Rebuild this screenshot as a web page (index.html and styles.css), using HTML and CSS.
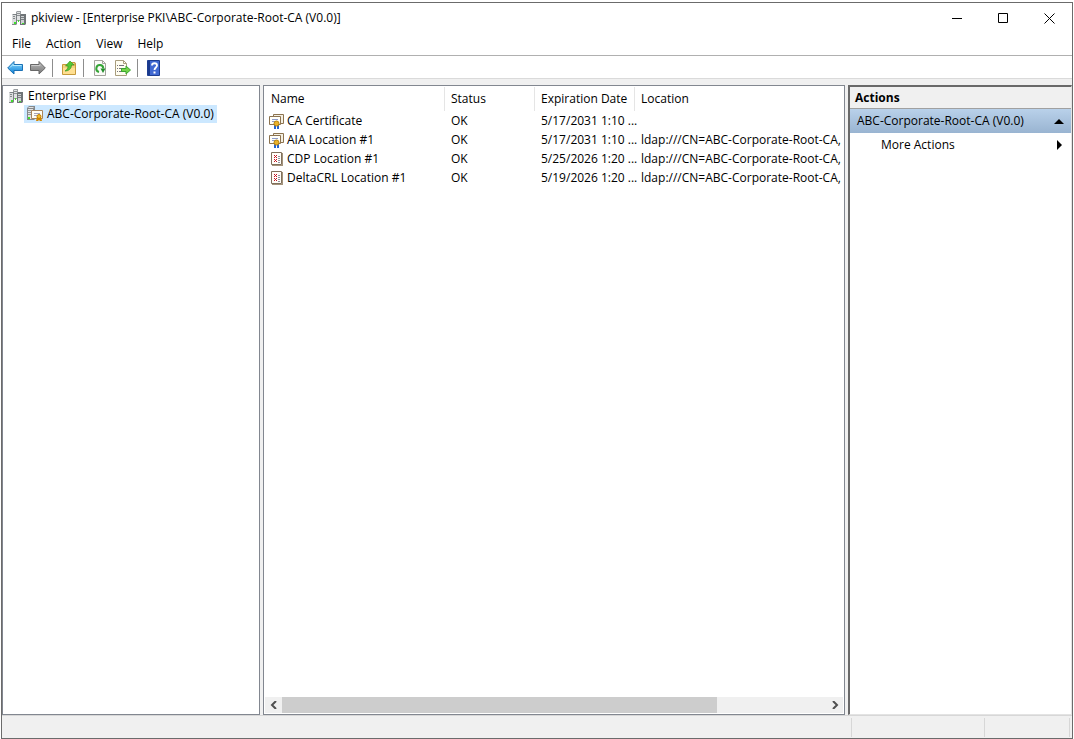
FILE: index.html
```html
<!DOCTYPE html>
<html lang="en">
<head>
    <meta charset="UTF-8">
    <meta name="viewport" content="width=device-width, initial-scale=1.0">
    <title>pkiview</title>
    <link rel="stylesheet" href="styles.css">
</head>
<body>

<!-- Shared icons -->
<svg class="icon-defs" aria-hidden="true">
    <symbol id="icon-servers" viewBox="0 0 16 16">
        <path d="M5 2l1-1h4v10H5z" fill="#9a9ea1"/>
        <path d="M6 2h3v8H6z" fill="#e0e2e3"/>
        <path d="M6 3h3v1H6zM6 5h3v1H6z" fill="#8d9194"/>
        <path d="M1 5l1-1h4v10l-1 1H1z" fill="#7d8285"/>
        <path d="M1 5h4v9H1z" fill="#dcdedf"/>
        <path d="M2 6h2v1H2zM2 8h2v1H2zM1 14h4v1H1z" fill="#84888b"/>
        <path d="M9 5l1-1h5v10l-1 1H9z" fill="#6f7477"/>
        <path d="M10 6h3v8h-3z" fill="#cfd2d4"/>
        <path d="M10 7h3v1h-3zM10 9h3v1h-3z" fill="#7a7f82"/>
        <path d="M3 12h2v2H3zM7 10h1v2H7zM11 13h2v1h-2z" fill="#3fe02b"/>
    </symbol>
    <symbol id="icon-ca" viewBox="0 0 16 16">
        <path d="M0 2l2-2h6v13l-1 1H0z" fill="#85898c"/>
        <path d="M1 3h5v10H1zM2 1h5L6 2H1z" fill="#e2e4e5"/>
        <path d="M1 4h5v1H1zM1 6h3v1H1zM1 8h3v1H1z" fill="#93979a"/>
        <path d="M1 11h2v2H1z" fill="#3fe02b"/>
        <path d="M4.500 4.500h11v8h-11z" fill="#fffdf4" stroke="#a8865c"/>
        <path d="M7 7h6v1H7zM7 9h3v1H7z" fill="#a7a5b8"/>
        <path d="M10 11l-1 4h2l1-1 1 1h2l-1-4z" fill="#d48700"/>
        <circle cx="12" cy="10.500" r="2" fill="#f4bd2c" stroke="#c27f00"/>
    </symbol>
    <symbol id="icon-cert" viewBox="0 0 16 16">
        <path d="M4.500 1.500h10v9h-10z" fill="#f5f0e3" stroke="#8c734f"/>
        <path d="M.5 3.500h11v8H.5z" fill="#fffef9" stroke="#8c734f"/>
        <path d="M3 6h6v1H3zM3 8h3v1H3z" fill="#8e9bc9"/>
        <path d="M5 11h2v5H5zM8 11h2v5H8z" fill="#2563cf"/>
        <circle cx="7.500" cy="10.500" r="2.500" fill="#e9b22c" stroke="#b98208"/>
    </symbol>
    <symbol id="icon-crl" viewBox="0 0 16 16">
        <path d="M2.500 1.500h10v12h-10z" fill="#fffdf8" stroke="#80705c"/>
        <path d="M13 2h1v13H3v-1h10z" fill="#a3937b"/>
        <path d="M5 4h1v1H5zM7 4h1v1H7zM6 5h1v1H6zM5 6h1v1H5zM7 6h1v1H7zM5 8h1v1H5zM7 8h1v1H7zM6 9h1v1H6zM5 10h1v1H5zM7 10h1v1H7z" fill="#c31322"/>
        <path d="M9 5h2v1H9zM9 7h2v1H9zM9 9h2v1H9zM9 11h2v1H9z" fill="#8f92a0"/>
    </symbol>
</svg>

<div class="window">
    <header class="title-bar">
        <svg class="icon"><use href="#icon-servers"/></svg>
        <h1>pkiview - [Enterprise PKI\ABC-Corporate-Root-CA (V0.0)]</h1>
        <div class="window-buttons">
            <button type="button" aria-label="Minimize"><svg viewBox="0 0 11 11"><path d="M0 5.500h10"/></svg></button>
            <button type="button" aria-label="Maximize"><svg viewBox="0 0 11 11"><path d="M.5.500h9v9h-9z"/></svg></button>
            <button type="button" aria-label="Close"><svg viewBox="0 0 11 11"><path d="M.5.500l10 10M10.500.500l-10 10"/></svg></button>
        </div>
    </header>

    <nav class="menu-bar">
        <button type="button">File</button>
        <button type="button">Action</button>
        <button type="button">View</button>
        <button type="button">Help</button>
    </nav>

    <div class="toolbar">
        <button type="button" aria-label="Back">
            <svg class="icon" viewBox="0 0 16 16">
                <defs><linearGradient id="blue" x2="0" y2="1"><stop stop-color="#8edcff"/><stop offset="1" stop-color="#0b7fd6"/></linearGradient></defs>
                <path d="M.7 8L7 1.500v3h8.500v6H7v3.500z" fill="url(#blue)" stroke="#1b70b4"/>
                <path d="M3 7.500l3-3v1h8.500" fill="none" stroke="#b5eaff"/>
            </svg>
        </button>
        <button type="button" aria-label="Forward">
            <svg class="icon" viewBox="0 0 16 16">
                <defs><linearGradient id="gray" x2="0" y2="1"><stop stop-color="#bbb"/><stop offset="1" stop-color="#777"/></linearGradient></defs>
                <path d="M15.300 8L9 1.500v3H.5v6H9v3.500z" fill="url(#gray)" stroke="#686868"/>
                <path d="M1.500 5.500H10v-1" fill="none" stroke="#ccc"/>
            </svg>
        </button>
        <span class="separator"></span>
        <button type="button" aria-label="Up one level">
            <svg class="icon" viewBox="0 0 16 16">
                <path d="M1.500 4.500h5l1-1h7v11h-13z" fill="#f3d27b" stroke="#c69a3c"/>
                <path d="M10 2.500h4V5h-4z" fill="#ead08b" stroke="#c69a3c"/>
                <path d="M2 8h12v6H2z" fill="#ffdf91"/>
                <path d="M4 11c2-1 3-3 3-5H4.500L9 1l4 4h-2.500c0 4-3 6-6.500 6z" fill="#55c936" stroke="#2f8f1e" stroke-width=".6"/>
            </svg>
        </button>
        <span class="separator"></span>
        <button type="button" aria-label="Refresh">
            <svg class="icon" viewBox="0 0 16 16">
                <path d="M2.500.500h8l3 3v12h-11z" fill="#fbfbf8" stroke="#a3a39d"/>
                <path d="M10.500.500v3h3" fill="none" stroke="#a3a39d"/>
                <path d="M7 12a3.500 3.500 0 1 1 4.300-3.500" fill="none" stroke="#35a536" stroke-width="2"/>
                <path d="M8.500 8.500h5l-2.500 4.500z" fill="#248d2c"/>
            </svg>
        </button>
        <button type="button" aria-label="Export list">
            <svg class="icon" viewBox="0 0 16 16">
                <path d="M.5.500h8l3 3v12H.5z" fill="#fffdf0" stroke="#a99d7d"/>
                <path d="M8.500.500v3h3" fill="none" stroke="#a99d7d"/>
                <path d="M2 5h1v1H2zM2 8h1v1H2zM2 11h1v1H2zM4 5h5v1H4zM4 8h4v1H4zM4 11h4v1H4z" fill="#77747d"/>
                <path d="M6.500 8.500H11V6l4.500 4-4.500 4v-2.500H6.500z" fill="#75d449" stroke="#3ba52f"/>
            </svg>
        </button>
        <span class="separator"></span>
        <button type="button" aria-label="Help topics">
            <svg class="icon" viewBox="0 0 16 16">
                <path d="M1.500.500h12v15h-12z" fill="#4169d2" stroke="#1d3d91"/>
                <path d="M3 1v14" stroke="#19398e" stroke-width="2"/>
                <path d="M6 5.500c0-3 5-3 5 0 0 2-2.500 2-2.500 4.500M7.500 12.500h2" fill="none" stroke="#fff" stroke-width="1.800"/>
            </svg>
        </button>
    </div>

    <main class="panes">
        <section class="tree" aria-label="Console tree">
            <ul>
                <li>
                    <div class="tree-item"><svg class="icon"><use href="#icon-servers"/></svg><span>Enterprise PKI</span></div>
                    <ul>
                        <li><div class="tree-item selected"><svg class="icon"><use href="#icon-ca"/></svg><span>ABC-Corporate-Root-CA (V0.0)</span></div></li>
                    </ul>
                </li>
            </ul>
        </section>

        <section class="list">
            <div class="list-content">
                <table>
                    <colgroup>
                        <col class="col-name">
                        <col class="col-status">
                        <col class="col-date">
                        <col>
                    </colgroup>
                    <thead>
                        <tr><th>Name</th><th>Status</th><th>Expiration Date</th><th>Location</th></tr>
                    </thead>
                    <tbody>
                        <tr>
                            <td><div class="name"><svg class="icon"><use href="#icon-cert"/></svg>CA Certificate</div></td>
                            <td>OK</td><td>5/17/2031 1:10 ...</td><td></td>
                        </tr>
                        <tr>
                            <td><div class="name"><svg class="icon"><use href="#icon-cert"/></svg>AIA Location #1</div></td>
                            <td>OK</td><td>5/17/2031 1:10 ...</td><td>ldap:///CN=ABC-Corporate-Root-CA,</td>
                        </tr>
                        <tr>
                            <td><div class="name"><svg class="icon"><use href="#icon-crl"/></svg>CDP Location #1</div></td>
                            <td>OK</td><td>5/25/2026 1:20 ...</td><td>ldap:///CN=ABC-Corporate-Root-CA,</td>
                        </tr>
                        <tr>
                            <td><div class="name"><svg class="icon"><use href="#icon-crl"/></svg>DeltaCRL Location #1</div></td>
                            <td>OK</td><td>5/19/2026 1:20 ...</td><td>ldap:///CN=ABC-Corporate-Root-CA,</td>
                        </tr>
                    </tbody>
                </table>
            </div>
            <div class="scrollbar">
                <button type="button" aria-label="Scroll left"><svg viewBox="0 0 8 8"><path d="M6 0L2 4l4 4"/></svg></button>
                <div class="track"><div class="thumb"></div></div>
                <button type="button" aria-label="Scroll right"><svg viewBox="0 0 8 8"><path d="M2 0l4 4-4 4"/></svg></button>
            </div>
        </section>

        <aside class="actions">
            <h2>Actions</h2>
            <button type="button" class="action-group">ABC-Corporate-Root-CA (V0.0)
                <svg viewBox="0 0 10 10"><path d="M0 8l5-5 5 5z"/></svg>
            </button>
            <button type="button" class="action-item">More Actions
                <svg viewBox="0 0 10 10"><path d="M3 0l5 5-5 5z"/></svg>
            </button>
        </aside>
    </main>

    <footer class="status-bar">
        <span class="status-main"></span>
        <span class="status-mid"></span>
        <span class="status-end"></span>
    </footer>
</div>

</body>
</html>
```
FILE: styles.css
```css
* {
    margin: 0;
    padding: 0;
    box-sizing: border-box;
}

body {
    height: 100vh;
    padding: 2px 1px 0;
    background: #fff;
    color: #000;
    font: 12px/18px "Open Sans", "Noto Sans", sans-serif;
    overflow: hidden;
}

button {
    border: none;
    background: none;
    color: inherit;
    font: inherit;
}

ul {
    list-style: none;
}

.icon-defs {
    position: absolute;
    width: 0;
    height: 0;
}

.icon {
    width: 16px;
    height: 16px;
    flex: none;
    display: block;
}

.window {
    height: 100%;
    display: flex;
    flex-direction: column;
    border: 1px solid #6b6b6b;
    background: #f0f0f0;
}

/* Title bar */
.title-bar {
    display: flex;
    align-items: center;
    height: 30px;
    padding-left: 9px;
    gap: 4px;
    background: #fff;
}

.title-bar h1 {
    flex: 1;
    font-size: 12px;
    font-weight: normal;
}

.window-buttons {
    display: flex;
    height: 100%;
}

.window-buttons button {
    width: 46px;
    display: flex;
    align-items: center;
    justify-content: center;
}

.window-buttons svg {
    width: 11px;
    height: 11px;
    fill: none;
    stroke: #000;
}

/* Menu */
.menu-bar {
    display: flex;
    height: 23px;
    padding-left: 2px;
    background: #fff;
    border-bottom: 1px solid #b0b0b0;
}

.menu-bar button {
    padding: 0 8px;
}

.menu-bar button + button {
    padding-left: 7px;
}

/* Toolbar */
.toolbar {
    display: flex;
    align-items: center;
    height: 23px;
    padding: 2px 0 0 5px;
    background: #fff;
    border-bottom: 1px solid #dadada;
}

.toolbar button {
    margin-right: 7px;
}

.separator {
    width: 1px;
    height: 18px;
    margin: 0 8px 0 -1px;
    background: #8d8d8d;
}

/* Panes */
.panes {
    flex: 1;
    display: flex;
    min-height: 0;
    padding-top: 6px;
}

.tree,
.list {
    background: #fff;
    border: 1px solid #828790;
}

.tree {
    width: 258px;
    margin-right: 3px;
    padding-top: 1px;
}

.tree ul ul {
    padding-left: 21px;
}

.tree-item {
    display: flex;
    align-items: center;
    width: max-content;
    height: 18px;
    gap: 4px;
    padding: 0 5px;
}

.tree-item.selected {
    padding: 0 3px;
    background: #cce8ff;
}

.list {
    flex: 1;
    min-width: 0;
    display: flex;
    flex-direction: column;
    padding: 1px;
}

.list-content {
    flex: 1;
    overflow: hidden;
}

table {
    width: 100%;
    table-layout: fixed;
    border-collapse: separate;
    border-spacing: 0;
}

.col-name {
    width: 180px;
}

.col-status {
    width: 90px;
}

.col-date {
    width: 100px;
}

th,
td {
    padding-left: 6px;
    text-align: left;
    white-space: nowrap;
}

th {
    height: 24px;
    font-weight: normal;
    border-right: 1px solid #e5e5e5;
}

th:last-child {
    border-right: none;
}

td {
    height: 19px;
}

td:first-child {
    padding-left: 4px;
}

.name {
    display: flex;
    align-items: center;
    gap: 2px;
}

.scrollbar {
    display: flex;
    height: 16px;
    background: #f0f0f0;
}

.scrollbar button {
    width: 17px;
    display: flex;
    align-items: center;
    justify-content: center;
}

.scrollbar svg {
    width: 8px;
    height: 8px;
    fill: none;
    stroke: #505050;
    stroke-width: 2;
}

.track {
    flex: 1;
}

.thumb {
    width: 80%;
    height: 100%;
    background: #cdcdcd;
}

/* Actions pane */
.actions {
    width: 224px;
    margin-left: 3px;
    background: #fff;
    border: 2px solid #696969;
    border-color: #696969 #e3e3e3 #e3e3e3 #696969;
    border-right-width: 1px;
    border-bottom-width: 1px;
}

.actions h2 {
    height: 22px;
    padding-left: 5px;
    background: #f0f0f0;
    border-bottom: 1px solid #a0a0a0;
    font-size: 12px;
    line-height: 22px;
}

.actions button {
    display: flex;
    align-items: center;
    justify-content: space-between;
    width: 100%;
    height: 24px;
    padding: 0 7px;
}

.actions svg {
    width: 10px;
    height: 10px;
}

.actions .action-group {
    background: linear-gradient(#b9d1ea, #99b4d1);
}

.actions .action-item {
    padding-left: 31px;
}

/* Status bar */
.status-bar {
    display: flex;
    height: 23px;
    padding: 2px 2px 1px 0;
    border-top: 1px solid #d7d7d7;
}

.status-bar span {
    border-right: 1px solid #d7d7d7;
}

.status-main {
    flex: 1;
}

.status-mid {
    width: 133px;
}

.status-end {
    width: 85px;
}
```
